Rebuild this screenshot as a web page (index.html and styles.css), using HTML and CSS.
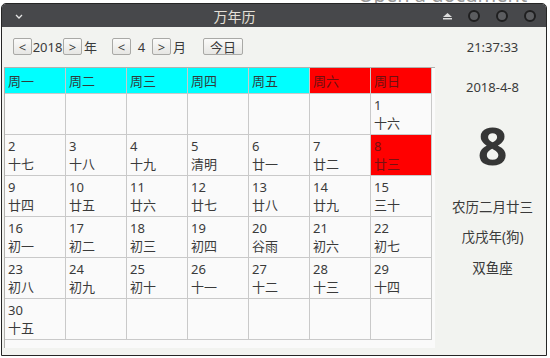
FILE: index.html
```html
<!DOCTYPE html>
<html>
  <head>
    <meta charset="utf-8" />
    <link rel="stylesheet" href="styles.css">
  </head>
  <body>
    <div class="behind">Open a document</div>
    <div class="window">
      <div class="titlebar">
        <div class="menu-btn">
          <svg width="8" height="5" viewBox="0 0 8 5"><polyline points="1,1 4,4 7,1" fill="none" stroke="#e6e6e6" stroke-width="1.3" /></svg>
        </div>
        <div class="title">万年历</div>
        <div class="win-controls">
          <svg class="eject" width="9" height="7" viewBox="0 0 9 7"><polygon points="4.5,0 9,4 0,4" fill="#dcdcdc" /><rect x="0" y="5" width="9" height="1.5" fill="#dcdcdc" /></svg>
          <span class="dot"></span>
          <span class="dot"></span>
          <span class="dot"></span>
        </div>
      </div>

      <div class="content">
        <div class="left">
          <div class="toolbar">
            <button class="nav">&lt;</button><span class="year">2018</span><button class="nav">&gt;</button><span class="unit">年</span>
            <button class="nav month-prev">&lt;</button><span class="month">4</span><button class="nav">&gt;</button><span class="unit">月</span>
            <button class="today">今日</button>
          </div>

          <div class="table-frame">
            <div class="grid">
              <div class="head">周一</div>
              <div class="head">周二</div>
              <div class="head">周三</div>
              <div class="head">周四</div>
              <div class="head">周五</div>
              <div class="head weekend">周六</div>
              <div class="head weekend">周日</div>

              <div class="cell"></div><div class="cell"></div><div class="cell"></div><div class="cell"></div><div class="cell"></div><div class="cell"></div>
              <div class="cell"><span>1</span><span>十六</span></div>

              <div class="cell"><span>2</span><span>十七</span></div>
              <div class="cell"><span>3</span><span>十八</span></div>
              <div class="cell"><span>4</span><span>十九</span></div>
              <div class="cell"><span>5</span><span>清明</span></div>
              <div class="cell"><span>6</span><span>廿一</span></div>
              <div class="cell"><span>7</span><span>廿二</span></div>
              <div class="cell selected"><span>8</span><span>廿三</span></div>

              <div class="cell"><span>9</span><span>廿四</span></div>
              <div class="cell"><span>10</span><span>廿五</span></div>
              <div class="cell"><span>11</span><span>廿六</span></div>
              <div class="cell"><span>12</span><span>廿七</span></div>
              <div class="cell"><span>13</span><span>廿八</span></div>
              <div class="cell"><span>14</span><span>廿九</span></div>
              <div class="cell"><span>15</span><span>三十</span></div>

              <div class="cell"><span>16</span><span>初一</span></div>
              <div class="cell"><span>17</span><span>初二</span></div>
              <div class="cell"><span>18</span><span>初三</span></div>
              <div class="cell"><span>19</span><span>初四</span></div>
              <div class="cell"><span>20</span><span>谷雨</span></div>
              <div class="cell"><span>21</span><span>初六</span></div>
              <div class="cell"><span>22</span><span>初七</span></div>

              <div class="cell"><span>23</span><span>初八</span></div>
              <div class="cell"><span>24</span><span>初九</span></div>
              <div class="cell"><span>25</span><span>初十</span></div>
              <div class="cell"><span>26</span><span>十一</span></div>
              <div class="cell"><span>27</span><span>十二</span></div>
              <div class="cell"><span>28</span><span>十三</span></div>
              <div class="cell"><span>29</span><span>十四</span></div>

              <div class="cell"><span>30</span><span>十五</span></div>
              <div class="cell"></div><div class="cell"></div><div class="cell"></div><div class="cell"></div><div class="cell"></div><div class="cell"></div>
            </div>
          </div>
        </div>

        <div class="info">
          <div class="clock">21:37:33</div>
          <div class="date">2018-4-8</div>
          <div class="big-day">8</div>
          <div class="lunar">农历二月廿三</div>
          <div class="ganzhi">戊戌年(狗)</div>
          <div class="zodiac">双鱼座</div>
        </div>
      </div>
    </div>
  </body>
</html>
```

FILE: styles.css
```css
body {
  margin: 0;
  width: 550px;
  height: 358px;
  overflow: hidden;
  background-color: #ffffff;
  font-family: "Noto Sans", "Noto Sans CJK SC", sans-serif;
  font-size: 13px;
  color: #3a3a3a;
  position: relative;
}
.behind {
  position: absolute;
  top: -19px;
  left: 358px;
  font-size: 20px;
  color: #9a9a9a;
  z-index: 0;
}
.window {
  position: relative;
  z-index: 1;
  box-sizing: border-box;
  margin: 3px 0 0 1px;
  width: 546px;
  height: 353px;
  border: 1px solid #262626;
  border-radius: 5px 5px 0 0;
  background-color: #f2f3f0;
  display: flex;
  flex-direction: column;
}
.titlebar {
  height: 23px;
  background-color: #47484b;
  border-radius: 4px 4px 0 0;
  display: flex;
  align-items: center;
}
.menu-btn {
  width: 30px;
  display: flex;
  justify-content: center;
  padding-left: 2px;
  margin-top: 2px;
}
.title {
  flex: 1;
  text-align: center;
  font-family: "Noto Sans CJK SC", sans-serif;
  font-size: 14px;
  color: #e4e0d8;
  padding-right: 8px;
}
.win-controls {
  display: flex;
  align-items: center;
  gap: 16px;
  padding-right: 10px;
}
.eject {
  margin-top: 1px;
}
.dot {
  width: 8px;
  height: 8px;
  border-radius: 50%;
  border: 2px solid #1f1f20;
  background-color: #5c5d60;
}
.content {
  flex: 1;
  display: flex;
}
.left {
  width: 433px;
}
.toolbar {
  display: flex;
  align-items: center;
  padding: 11px 0 0 11px;
  height: 17px;
}
button {
  box-sizing: border-box;
  height: 17px;
  padding: 0;
  border: 1px solid #a9a9a6;
  border-radius: 2px;
  background: linear-gradient(#fbfbfa, #e6e6e3);
  font-family: "Noto Sans", "Noto Sans CJK SC", sans-serif;
  font-size: 13px;
  line-height: 14px;
  color: #3a3a3a;
}
.nav {
  width: 19px;
}
.year {
  width: 31px;
  text-align: center;
}
.unit {
  margin-left: 2px;
  width: 15px;
}
.month-prev {
  margin-left: 13px;
}
.month {
  width: 21px;
  text-align: center;
}
.today {
  margin-left: 15px;
  width: 40px;
}
.table-frame {
  box-sizing: border-box;
  margin: 12px 0 0 2px;
  width: 431px;
  height: 281px;
  background-color: #fafafa;
  border-top: 1px solid #b1b1ae;
  border-left: 1px solid #b1b1ae;
}
.grid {
  display: grid;
  grid-template-columns: repeat(7, 60px);
  grid-template-rows: 25px repeat(6, 40px);
  gap: 1px;
  width: 426px;
  padding: 0 1px 1px 0;
  background-color: #c9c9c9;
}
.head {
  background-color: #00ffff;
  padding-left: 3px;
  display: flex;
  align-items: center;
  font-family: "Noto Sans CJK SC", sans-serif;
  color: #2f3d3d;
}
.head.weekend {
  background-color: #ff0000;
  color: #6e1010;
}
.cell {
  background-color: #fafafa;
  padding-left: 3px;
  display: flex;
  flex-direction: column;
  justify-content: center;
  line-height: 17px;
}
.cell span:last-child {
  font-family: "Noto Sans CJK SC", sans-serif;
}
.cell.selected {
  background-color: #ff0000;
  color: #7a1010;
}
.info {
  flex: 1;
  padding-left: 4px;
  display: flex;
  flex-direction: column;
  align-items: center;
  line-height: 16px;
}
.clock {
  margin-top: 12px;
}
.date {
  margin-top: 24px;
}
.big-day {
  margin-top: 20px;
  font-size: 52px;
  font-weight: bold;
  line-height: 60px;
  color: #363636;
}
.lunar {
  margin-top: 23px;
  font-family: "Noto Sans CJK SC", sans-serif;
  font-size: 13.5px;
}
.ganzhi {
  margin-top: 15px;
  font-size: 13.5px;
}
.zodiac {
  margin-top: 14px;
  font-family: "Noto Sans CJK SC", sans-serif;
  font-size: 13.5px;
}
```
